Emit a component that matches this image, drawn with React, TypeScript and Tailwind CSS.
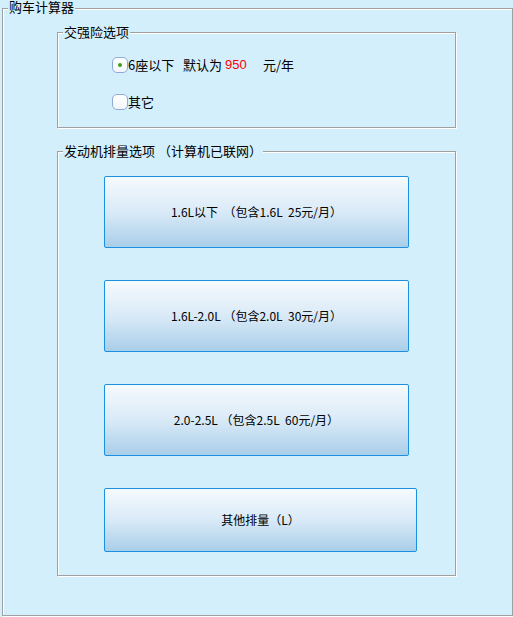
import React from 'react';

const BUTTONS = [
    { label: '1.6L以下  （包含1.6L  25元/月）', w: 'w-[305px]', h: 'h-[72px]' },
    { label: '1.6L-2.0L （包含2.0L  30元/月）', w: 'w-[305px]', h: 'h-[72px]' },
    { label: '2.0-2.5L （包含2.5L  60元/月）', w: 'w-[305px]', h: 'h-[72px]' },
    { label: '其他排量（L）', w: 'w-[313px]', h: 'h-[64px]' },
];

function Radio({ checked }: { checked?: boolean }) {
    return (
        <span className="w-4 h-4 rounded-[5px] border border-[#8eabd8] bg-gradient-to-b from-white to-[#f2f6fb] flex items-center justify-center shrink-0">
            {checked && <span className="w-[4px] h-[4px] rounded-full bg-[#3d9c1c]" />}
        </span>
    );
}

export default function App() {
    return (
        <div className="w-[513px] h-[617px] pt-[1px] bg-[#d4effc] text-black text-[13px] font-['Noto_Sans_CJK_SC','Noto_Sans',sans-serif]">
            <fieldset className="ml-[2px] w-[511px] h-[615px] border border-[#a0a0a0] shadow-[1px_1px_0_#fff,inset_1px_1px_0_#fff]">
                <legend className="ml-[5px] px-[1px] leading-[14px] bg-[#d4effc] font-['Liberation_Sans','Noto_Sans_CJK_SC',sans-serif]">购车计算器</legend>

                <fieldset className="ml-[54px] mt-[9px] w-[399px] h-[104px] border border-[#a0a0a0] shadow-[1px_1px_0_#fff,inset_1px_1px_0_#fff]">
                    <legend className="ml-[5px] px-[1px] leading-[16px] bg-[#d4effc]">交强险选项</legend>
                    <div className="ml-[54px] mt-[17px] flex flex-col gap-[21px]">
                        <label className="flex items-center h-4 whitespace-nowrap">
                            <Radio checked />
                            <span className="w-[55px]">6座以下</span>
                            <span className="w-[42px]">默认为</span>
                            <span className="w-[38px] text-[#ff0000] font-['Liberation_Sans',sans-serif]">950</span>
                            <span>元/年</span>
                        </label>
                        <label className="flex items-center h-4 whitespace-nowrap">
                            <Radio />
                            <span>其它</span>
                        </label>
                    </div>
                </fieldset>

                <fieldset className="ml-[54px] mt-[15px] w-[399px] h-[433px] border border-[#a0a0a0] shadow-[1px_1px_0_#fff,inset_1px_1px_0_#fff]">
                    <legend className="ml-[5px] px-[1px] leading-[16px] bg-[#d4effc] whitespace-pre">发动机排量选项 （计算机已联网）</legend>
                    <div className="ml-[46px] mt-[17px] flex flex-col gap-[32px]">
                        {BUTTONS.map((b) => (
                            <button
                                key={b.label}
                                className={`${b.w} ${b.h} rounded-[2px] border border-[#1b8fe0] bg-gradient-to-b from-[#f6fafd] via-[#d9eaf7] to-[#a9cee9] text-[12px] text-black whitespace-pre flex items-center justify-center`}
                            >
                                {b.label}
                            </button>
                        ))}
                    </div>
                </fieldset>
            </fieldset>
        </div>
    );
}
